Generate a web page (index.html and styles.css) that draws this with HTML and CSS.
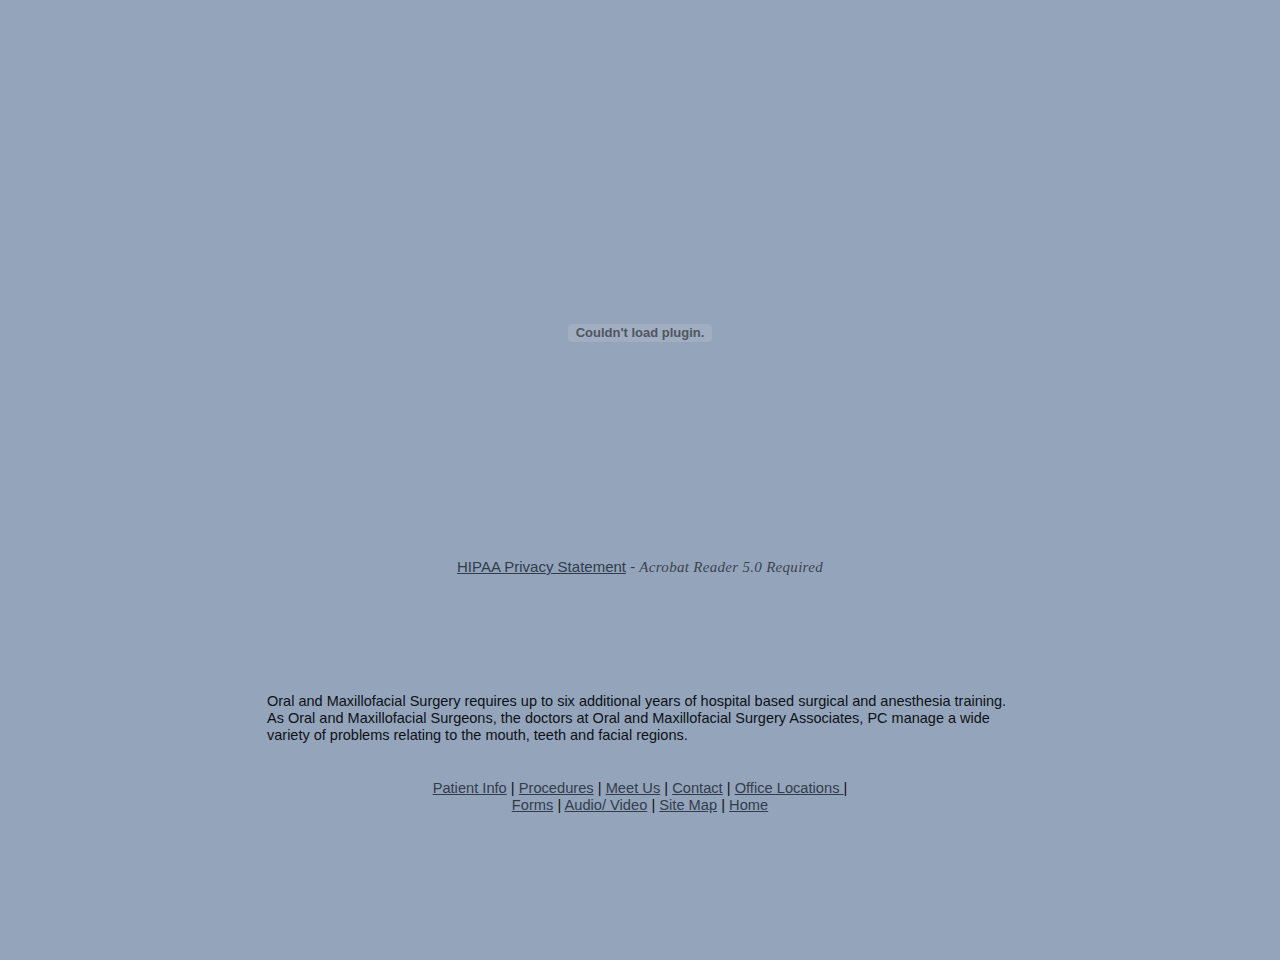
FILE: index.html
```html
<!DOCTYPE html>
<html>
<head>
<meta charset="utf-8">
<link rel="stylesheet" href="styles.css">
</head>
<body>
<div class="page">
  <div class="plugin-area">
    <span class="plugin-msg">Couldn't load plugin.</span>
  </div>
  <div class="hipaa">
    <a href="#">HIPAA Privacy Statement</a> - <em class="acro">Acrobat Reader 5.0 Required</em>
  </div>
  <div class="intro">
    Oral and Maxillofacial Surgery requires up to six additional years of hospital based surgical and anesthesia training. As Oral and Maxillofacial Surgeons, the doctors at Oral and Maxillofacial Surgery Associates, PC manage a wide variety of problems relating to the mouth, teeth and facial regions.
  </div>
  <div class="nav">
    <a href="#">Patient Info</a> | <a href="#">Procedures</a> | <a href="#">Meet Us</a> | <a href="#">Contact</a> | <a href="#">Office Locations </a>|<br>
    <a href="#">Forms</a> | <a href="#">Audio/ Video</a> | <a href="#">Site Map</a> | <a href="#">Home</a>
  </div>
</div>
</body>
</html>
```
FILE: styles.css
```css
html, body {
  margin: 0;
  padding: 0;
  background: #94a5bb;
  height: 100%;
}
.page {
  font-family: "Liberation Sans", Arial, sans-serif;
  color: #111;
  display: flex;
  flex-direction: column;
  align-items: center;
}
.plugin-area {
  width: 100%;
  height: 558px;
  display: flex;
  justify-content: center;
  padding-top: 324px;
  box-sizing: border-box;
}
.plugin-msg {
  display: inline-block;
  height: 18px;
  line-height: 18px;
  padding: 0 8px;
  background: #a1adc0;
  border-radius: 4px;
  color: #4f5662;
  font-family: "Liberation Sans", Arial, sans-serif;
  font-weight: bold;
  font-size: 13px;
}
.hipaa {
  font-size: 15px;
  line-height: 18px;
  color: #333a46;
  text-align: center;
  height: 135px;
}
.hipaa a, .nav a {
  color: #333c4c;
  text-decoration: underline;
}
.acro {
  font-family: "Liberation Serif", "Times New Roman", serif;
  font-style: italic;
  font-size: 15px;
  color: #3c4350;
  letter-spacing: 0.3px;
}
.intro {
  width: 746px;
  font-size: 14.5px;
  line-height: 17px;
  color: #0e1116;
  height: 87px;
}
.nav {
  font-size: 14.67px;
  line-height: 17px;
  text-align: center;
  color: #111;
}
```
